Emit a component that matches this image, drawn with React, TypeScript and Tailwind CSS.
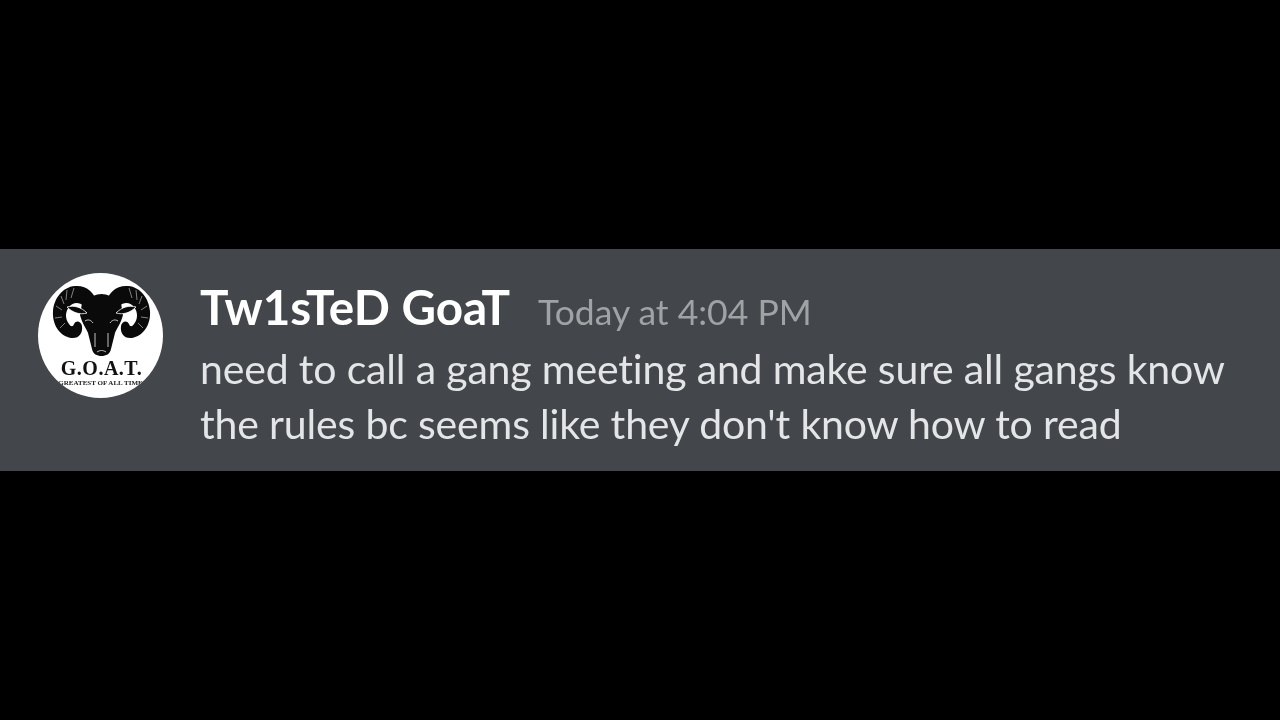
function RamAvatar() {
  const horn =
    "M60 32C57 19 48 12 37 13C24 14 16 26 15 38C14 52 22 63 33 65C41 66 45 60 44 53C43 48 38 47 36 51C35 54 33 54 31 51C27 46 27 39 31 34C35 29 41 29 46 33C49 36 51 38 53 40Z";
  return (
    <div className="relative w-[125px] h-[125px] shrink-0 rounded-full bg-white overflow-hidden">
      <svg viewBox="0 0 125 125" className="absolute inset-0 w-full h-full">
        <path d={horn} fill="#0a0a0a" />
        <g transform="translate(127 0) scale(-1 1)">
          <path d={horn} fill="#0a0a0a" />
        </g>
        <g stroke="#fff" strokeWidth="0.7" fill="none" opacity="0.7">
          <path d="M36 15L33 25M29 17L28 27M23 23L26 31M18 33L24 37M17 45L24 44M22 55L27 50" />
          <path d="M91 15L94 25M98 17L99 27M104 23L101 31M109 33L103 37M110 45L103 44M105 55L100 50" />
        </g>
        <path
          d="M44 30C52 24 58 21 63.5 21C69 21 75 24 83 30L85 42C83 50 79 55 77 60L73 76C72 81 68 83 63.5 83C59 83 55 81 54 76L50 60C48 55 44 50 42 42Z"
          fill="#0a0a0a"
        />
        <path
          d="M29 34C36 32 43 34 49 40C42 42 35 40 29 34Z"
          fill="#0a0a0a"
          stroke="#fff"
          strokeWidth="0.8"
        />
        <path
          d="M98 34C91 32 84 34 78 40C85 42 92 40 98 34Z"
          fill="#0a0a0a"
          stroke="#fff"
          strokeWidth="0.8"
        />
        <path
          d="M47 48C50 46 53 47 55 50M80 48C77 46 74 47 72 50M57 60L57 74M70 60L70 74M59 79C62 77 65 77 68 79"
          stroke="#d8d8d8"
          strokeWidth="0.9"
          fill="none"
        />
      </svg>
      <div className="absolute left-[2px] right-0 top-[84px] text-center text-[20px] leading-[22px] font-bold tracking-[0.5px] text-[#111] font-['Liberation_Serif',serif]">
        G.O.A.T.
      </div>
      <div className="absolute left-0 right-0 top-[105px] whitespace-nowrap text-center text-[7px] leading-[10px] font-bold text-[#222] font-['Liberation_Serif',serif]">
        GREATEST OF ALL TIME
      </div>
    </div>
  );
}

export default function App() {
  return (
    <div className="h-screen bg-black flex items-center overflow-hidden">
      <div className="w-full h-[222px] bg-[#43474b] pt-6 pl-[38px] flex gap-[37px] font-['Lato',sans-serif] [font-variant-ligatures:none]">
        <div className="blur-[0.4px]">
          <RamAvatar />
        </div>
        <div className="mt-1 blur-[0.4px]">
          <div className="flex items-baseline gap-[28px] -mb-[1px]">
            <span className="text-[47.6px] leading-[60px] font-bold text-white">
              Tw1sTeD GoaT
            </span>
            <span className="text-[35.5px] leading-[60px] text-[#a0a3a6]">
              Today at 4:04 PM
            </span>
          </div>
          <p className="w-[1060px] text-[41px] leading-[55px] tracking-[-0.16px] text-[#e3e5e6]">
            need to call a gang meeting and make sure all gangs know
            <br />
            the rules bc seems like they don't know how to read
          </p>
        </div>
      </div>
    </div>
  );
}
